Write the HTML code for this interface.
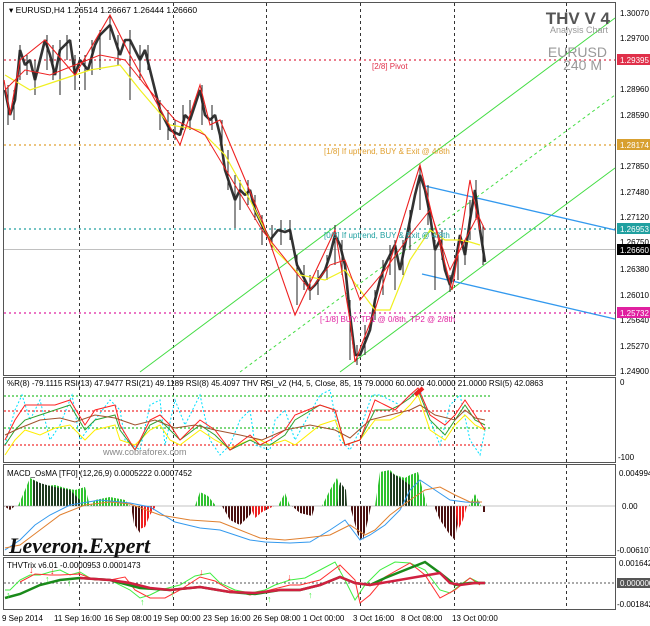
<!DOCTYPE html>
<html><head><meta charset="utf-8"><style>
html,body{margin:0;padding:0;background:#fff;width:650px;height:626px;overflow:hidden}
svg{display:block;font-family:"Liberation Sans",sans-serif}
</style></head><body>
<svg width="650" height="626" viewBox="0 0 650 626" xmlns="http://www.w3.org/2000/svg">
<defs>
<pattern id="gs" width="3" height="10" patternUnits="userSpaceOnUse"><rect width="2" height="10" fill="#2fc22f"/></pattern>
<pattern id="gd" width="3" height="10" patternUnits="userSpaceOnUse"><rect width="2" height="10" fill="#1f3a1f"/></pattern>
<pattern id="rs" width="3" height="10" patternUnits="userSpaceOnUse"><rect width="2" height="10" fill="#f02020"/></pattern>
<pattern id="rd" width="3" height="10" patternUnits="userSpaceOnUse"><rect width="2" height="10" fill="#4a1010"/></pattern>
</defs>
<rect width="650" height="626" fill="#fff"/>
<g fill="none" stroke="#555" stroke-width="1">
<rect x="3.5" y="2.5" width="612" height="373"/>
<rect x="3.5" y="377.5" width="612" height="85"/>
<rect x="3.5" y="464.5" width="612" height="91"/>
<rect x="3.5" y="557.5" width="612" height="52"/>
</g>
<g stroke="#333" stroke-dasharray="3,3" stroke-width="1">
<path d="M79.5 3V610M173.5 3V610M266.5 3V610M360.5 3V610M454.5 3V610M566.5 3V610"/>
</g>
<g stroke-dasharray="2,3" stroke-width="1.3">
<path d="M4 60H615" stroke="#e0304a"/>
<path d="M4 145H615" stroke="#e0a030"/>
<path d="M4 229H615" stroke="#20a0a0"/>
<path d="M4 313H615" stroke="#e020a0"/>
</g>
<path d="M4 249.5H615" stroke="#c0c0c0"/>
<path d="M140 372L615 18" stroke="#44dd44" fill="none"/>
<path d="M240 372L615 95" stroke="#44dd44" stroke-dasharray="3,3" fill="none"/>
<path d="M340 372L615 168" stroke="#44dd44" fill="none"/>
<path d="M425 186L615 230M422 274L615 319" stroke="#3399ee" stroke-width="1.3" fill="none"/>
<polyline fill="none" stroke="#333" stroke-width="2.6" stroke-linejoin="bevel" points="5,90 10,115 15,100 20,50 25,65 30,60 35,80 45,40 50,55 55,75 60,50 70,40 75,75 80,60 88,70 95,45 100,35 110,25 120,55 125,40 130,40 135,50 140,60 145,50 155,90 160,110 170,130 180,135 185,115 190,120 200,90 205,115 210,120 215,115 220,135 225,170 230,185 235,200 240,190 245,195 250,190 255,210 262,225 270,240 278,230 285,232 290,230 297,265 305,280 310,290 315,285 325,270 330,255 335,235 340,245 345,265 350,315 355,355 360,355 370,330 375,300 380,280 385,265 390,255 395,245 400,270 410,220 415,195 420,175 425,190 430,215 435,250 440,240 445,270 450,285 455,265 460,235 465,255 470,220 475,190 480,230 485,262"/>
<path stroke="#222" stroke-width="1" d="M8 85V125M14 90V120M20 45V80M27 55V75M35 60V95M47 35V70M53 45V80M60 40V95M67 35V60M75 55V90M85 55V90M92 40V75M100 30V70M110 15V40M118 35V65M130 30V100M140 45V80M148 45V70M160 100V130M168 110V140M175 120V140M183 105V130M190 100V130M202 85V125M212 105V130M222 120V150M228 150V190M235 175V228M240 180V210M248 180V205M255 195V220M262 215V245M272 225V250M281 220V245M290 220V240M297 255V305M304 265V290M310 275V300M318 270V295M327 255V280M335 225V265M342 240V275M350 300V360M357 345V365M365 325V355M375 290V320M383 260V295M390 245V275M395 240V290M403 240V275M410 210V250M420 165V210M428 185V225M435 240V290M442 230V260M450 275V292M458 255V280M465 240V265M470 200V240M476 180V220M483 225V265"/>
<polyline fill="none" stroke="#f0f020" stroke-width="1.2" points="5,75 30,90 60,80 90,70 120,65 140,90 170,125 200,130 225,155 250,200 275,250 300,275 325,280 345,270 360,290 375,310 390,310 410,260 430,230 445,240 460,240 470,242 480,245"/>
<polyline fill="none" stroke="#ee2020" stroke-width="1.1" points="4,80 10,115 20,60 45,40 75,75 110,15 130,55 155,100 180,145 200,85 210,125 220,120 262,220 295,315 335,230 350,320 355,362 375,310 420,165 432,215 452,290 470,180 480,230"/>
<polyline fill="none" stroke="#ee2020" stroke-width="1" points="5,90 25,70 50,75 75,65 100,55 125,60 145,85 175,120 205,135 235,185 262,230 290,265 310,290 330,265 345,260 360,300 385,270 410,235 430,210 450,270 465,240 478,215 485,230"/>
<text x="9" y="13" font-size="8.5" fill="#000">▾ EURUSD,H4  1.26514 1.26667 1.26444 1.26660</text>
<text x="610" y="24" font-size="17" font-weight="bold" fill="#555" text-anchor="end">THV V 4</text>
<text x="608" y="33" font-size="9" fill="#999" text-anchor="end">Analysis Chart</text>
<text x="607" y="57" font-size="14" fill="#999" text-anchor="end">EURUSD</text>
<text x="602" y="70" font-size="14" fill="#999" text-anchor="end">240 M</text>
<text x="372" y="69" font-size="8" fill="#e0304a">[2/8] Pivot</text>
<text x="324" y="154" font-size="8" fill="#e0a030">[1/8] If uptrend, BUY &amp; Exit @ 4/8th</text>
<text x="324" y="238" font-size="8" fill="#20a0a0">[0/8] If uptrend, BUY &amp; Exit @ 4/8th</text>
<text x="320" y="322" font-size="8" fill="#e020a0">[-1/8] BUY: TP1 @ 0/8th, TP2 @ 2/8th</text>
<g font-size="8" fill="#000">
<text x="620" y="16">1.30070</text><text x="620" y="41">1.29700</text>
<text x="620" y="92">1.28960</text><text x="620" y="118">1.28590</text>
<text x="620" y="169">1.27850</text><text x="620" y="195">1.27480</text>
<text x="620" y="220">1.27120</text><text x="620" y="245">1.26750</text>
<text x="620" y="272">1.26380</text><text x="620" y="298">1.26010</text>
<text x="620" y="323">1.25640</text><text x="620" y="349">1.25270</text>
<text x="620" y="374">1.24900</text>
</g>
<rect x="617" y="54" width="33" height="11" fill="#e0304a"/><text x="620" y="63" font-size="8" fill="#fff">1.29395</text>
<rect x="617" y="139" width="33" height="11" fill="#d8a030"/><text x="620" y="148" font-size="8" fill="#fff">1.28174</text>
<rect x="617" y="223" width="33" height="11" fill="#20a0a0"/><text x="620" y="232" font-size="8" fill="#fff">1.26953</text>
<rect x="617" y="244" width="33" height="11" fill="#000"/><text x="620" y="253" font-size="8" fill="#fff">1.26660</text>
<rect x="617" y="307" width="33" height="11" fill="#e020a0"/><text x="620" y="316" font-size="8" fill="#fff">1.25732</text>
<g stroke-dasharray="2,2" stroke-width="1.2">
<path d="M4 396H490M4 428H490" stroke="#30c030"/>
<path d="M4 411H490M4 445H490" stroke="#f03030"/>
</g>
<polyline fill="none" stroke="#00e0ff" stroke-dasharray="2,2" points="5,445 15,410 22,395 30,420 40,400 50,440 60,425 72,395 80,440 95,420 110,400 120,410 125,440 140,450 150,405 160,400 165,445 175,400 185,425 200,395 210,440 220,455 230,445 240,420 250,410 255,445 270,450 275,420 285,410 295,440 320,395 330,390 340,440 350,450 360,430 372,395 380,395 390,400 400,405 410,395 420,390 430,420 440,445 450,405 460,395 470,440 480,455 485,430"/>
<polyline fill="none" stroke="#ffee00" points="5,455 15,440 25,430 40,435 55,428 70,425 85,440 95,430 115,425 120,440 135,445 150,430 160,425 170,440 180,445 200,430 215,440 230,448 250,440 260,440 270,445 285,440 295,445 320,425 335,420 345,445 360,440 375,420 390,420 400,415 410,405 418,395 430,430 445,440 455,425 465,415 475,425 485,430"/>
<polyline fill="none" stroke="#30a030" points="5,445 15,430 25,420 40,415 55,410 70,405 85,430 95,420 115,415 120,430 135,450 150,425 160,420 170,430 180,440 200,425 215,435 230,450 250,440 260,445 270,445 285,435 295,420 320,405 335,410 345,445 360,440 375,410 390,410 400,405 410,398 418,390 430,420 445,435 455,420 465,405 475,420 485,425"/>
<polyline fill="none" stroke="#ff2020" points="5,440 15,420 25,405 40,405 55,405 70,400 85,425 95,410 115,405 120,425 135,450 150,420 160,415 170,425 180,440 200,420 215,430 230,450 250,435 260,445 270,440 285,430 295,415 320,405 335,410 345,445 360,440 375,400 385,405 395,410 410,395 418,388 430,415 445,425 455,415 465,400 475,415 485,430"/>
<polyline fill="none" stroke="#a0522d" points="5,435 20,428 40,420 60,418 75,422 95,415 115,418 135,425 155,420 175,428 195,425 215,430 240,435 262,440 285,430 310,425 335,430 350,438 370,420 390,415 410,410 420,405 435,415 455,420 465,410 475,418 485,420"/>
<path d="M415 395L423 388" stroke="#ee2020" stroke-width="4"/>
<text x="7" y="386" font-size="8" fill="#000">%R(8) -79.1115  RSI(13) 47.9477  RSI(21) 49.1189  RSI(8) 45.4097     THV RSI_v2   (H4,  5,  Close,  85,  15 79.0000  60.0000  40.0000  21.0000  RSI(5) 42.0863</text>
<text x="103" y="455" font-size="9" fill="#888">www.cobraforex.com</text>
<text x="620" y="385" font-size="8">0</text>
<text x="618" y="460" font-size="8">-100</text>
<polygon fill="url(#gs)" points="18,506 25,490 30,478 38,482 45,486 55,485 65,488 75,490 85,487 90,506"/>
<polygon fill="url(#gd)" points="33,506 33,480 40,483 50,486 60,488 70,490 80,500 82,506"/>
<polygon fill="url(#gs)" points="90,506 95,500 110,497 125,500 130,506"/>
<polygon fill="url(#rs)" points="131,506 137,530 145,527 150,515 156,506"/>
<polygon fill="url(#rd)" points="131,506 134,524 140,533 142,506"/>
<polygon fill="url(#rd)" points="4,506 10,510 15,506"/>
<polygon fill="url(#gs)" points="195,506 200,492 208,496 216,506"/>
<polygon fill="url(#rd)" points="222,506 230,520 240,525 250,515 255,506"/>
<polygon fill="url(#rs)" points="250,506 255,518 262,512 274,506"/>
<polygon fill="url(#gs)" points="278,506 285,493 290,506"/>
<polygon fill="url(#rd)" points="292,506 300,513 312,516 315,506"/>
<polygon fill="url(#gs)" points="322,506 330,490 337,478 346,506"/>
<polygon fill="url(#gd)" points="337,506 340,482 346,490 347,506"/>
<polygon fill="url(#rd)" points="350,506 358,535 363,540 368,520 371,506"/>
<polygon fill="url(#gs)" points="375,506 380,472 390,470 395,475 405,478 410,475 418,472 427,506"/>
<polygon fill="url(#gd)" points="390,506 390,472 400,478 410,485 412,506"/>
<polygon fill="url(#rd)" points="434,506 440,520 450,535 455,540 460,506"/>
<polygon fill="url(#rs)" points="455,506 458,530 463,520 467,506"/>
<polygon fill="url(#gs)" points="469,506 475,494 481,506"/>
<path d="M484 506V512" stroke="#4a1010" stroke-width="2"/>
<path d="M4 506H615" stroke="#888" stroke-width="0.6"/>
<polyline fill="none" stroke="#3399ee" points="5,550 20,540 35,525 50,515 70,505 100,500 130,503 150,507 175,522 200,528 220,530 235,535 250,540 265,542 290,543 310,542 330,530 345,520 360,540 370,535 385,525 400,510 410,490 420,480 435,490 450,500 465,502 480,503"/>
<polyline fill="none" stroke="#e08030" points="5,548 20,545 40,530 60,515 85,505 110,502 130,504 160,515 190,520 220,522 240,530 260,538 285,540 305,538 330,535 350,525 365,535 375,530 390,515 410,500 425,490 440,487 455,495 470,502 482,502"/>
<text x="7" y="476" font-size="8" fill="#000">MACD_OsMA [TF0] (12,26,9)  0.0005222 0.0007452</text>
<text x="9" y="553" font-size="22" font-weight="bold" font-style="italic" font-family="Liberation Serif,serif" fill="#111">Leveron.Expert</text>
<text x="619" y="476" font-size="8">0.004994</text>
<text x="622" y="509" font-size="8">0.00</text>
<text x="617" y="553" font-size="8">-0.006107</text>
<path d="M4 583H615" stroke="#555" stroke-dasharray="2,2"/>
<polyline fill="none" stroke="#40ee40" points="5,590 10,590 20,580 30,575 40,575 50,572 60,570 70,575 80,572 90,578 110,580 130,590 140,598 150,595 160,590 180,585 195,576 210,573 220,583 235,590 250,593 265,590 275,585 290,580 305,578 320,570 335,562 345,580 355,600 365,585 380,570 395,562 410,563 425,570 440,590 450,593 460,585 470,578 480,583"/>
<polyline fill="none" stroke="#ff3030" points="20,582 35,574 50,575 60,575 80,574 95,580 110,580 125,577 135,590 150,598 165,598 180,590 200,577 215,581 230,590 250,595 270,590 290,585 300,585 320,580 340,565 355,580 360,603 370,595 385,577 410,563 425,575 440,598 455,590 470,578 480,585"/>
<polyline fill="none" stroke="#1a8a1a" stroke-width="2.5" points="5,598 20,594 40,585 60,580 80,578 110,580 140,588 170,590 200,587 230,592 255,594 280,590 300,590 320,585 340,577 355,583 370,585 385,578 405,570 425,562 440,573 455,585 470,583 485,583"/>
<polyline fill="none" stroke="#d02040" stroke-width="2.5" points="80,578 110,580 130,583 150,588 170,590 200,587 230,592 255,593 280,590 300,590 320,585 340,577 355,583 370,585 440,573 450,583 460,585 475,583 485,583"/>
<g fill="#ff2020" font-size="9"><text x="29" y="573">↓</text><text x="50" y="574">↓</text><text x="77" y="574">↓</text><text x="199" y="575">↓</text><text x="287" y="580">↓</text><text x="337" y="570">↓</text></g>
<g fill="#40ee40" font-size="9"><text x="6" y="598">↑</text><text x="45" y="582">↑</text><text x="67" y="586">↑</text><text x="140" y="605">↑</text><text x="170" y="597">↑</text><text x="267" y="602">↑</text><text x="308" y="598">↑</text></g>
<text x="7" y="568" font-size="8" fill="#000">THVTrix v6.01 -0.0000953 0.0001473</text>
<text x="619" y="566" font-size="8">0.001642</text>
<rect x="617" y="578" width="33" height="10" fill="#555"/><text x="620" y="586" font-size="8" fill="#fff">0.000000</text>
<text x="617" y="607" font-size="8">-0.001842</text>
<g font-size="8" fill="#000">
<text x="2" y="621">9 Sep 2014</text><text x="54" y="621">11 Sep 16:00</text>
<text x="104" y="621">16 Sep 08:00</text><text x="153" y="621">19 Sep 00:00</text>
<text x="203" y="621">23 Sep 16:00</text><text x="253" y="621">26 Sep 08:00</text>
<text x="303" y="621">1 Oct 00:00</text><text x="353" y="621">3 Oct 16:00</text>
<text x="401" y="621">8 Oct 08:00</text><text x="452" y="621">13 Oct 00:00</text>
</g>
</svg>
</body></html>
